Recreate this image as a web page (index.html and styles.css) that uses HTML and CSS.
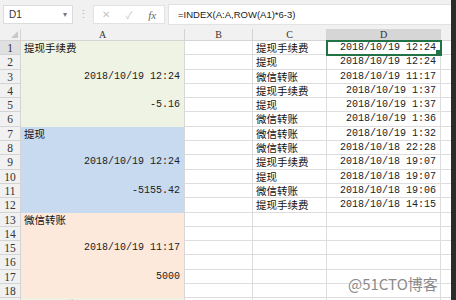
FILE: index.html
```html
<!DOCTYPE html>
<html lang="zh-CN">
<head>
    <meta charset="UTF-8">
    <title>INDEX 公式</title>
    <link rel="stylesheet" href="styles.css">
</head>
<body>
    <div class="window">
        <div class="toolbar">
            <div class="name-box">D1<span class="drop">&#9662;</span></div>
            <div class="dots">&#8942;</div>
            <div class="fx-buttons">
                <span class="btn">&#10005;</span>
                <span class="btn">&#10003;</span>
                <span class="btn fx">fx</span>
            </div>
            <div class="formula">=INDEX(A:A,ROW(A1)*6-3)</div>
        </div>
        <div class="sheet" id="sheet"></div>
        <div class="edge"></div>
        <div class="watermark">@51CTO博客</div>
    </div>

    <script>
        // column A is filled in groups of six rows
        const colA = {
            1: { text: '提现手续费' }, 3: { text: '2018/10/19 12:24', num: true }, 5: { text: '-5.16', num: true },
            7: { text: '提现' }, 9: { text: '2018/10/19 12:24', num: true }, 11: { text: '-5155.42', num: true },
            13: { text: '微信转账' }, 15: { text: '2018/10/19 11:17', num: true }, 17: { text: '5000', num: true },
            19: { text: '提现手续费' }
        };
        const list = [
            ['提现手续费', '2018/10/19 12:24'],
            ['提现', '2018/10/19 12:24'],
            ['微信转账', '2018/10/19 11:17'],
            ['提现手续费', '2018/10/19 1:37'],
            ['提现', '2018/10/19 1:37'],
            ['微信转账', '2018/10/19 1:36'],
            ['微信转账', '2018/10/19 1:32'],
            ['微信转账', '2018/10/18 22:28'],
            ['提现手续费', '2018/10/18 19:07'],
            ['提现', '2018/10/18 19:07'],
            ['微信转账', '2018/10/18 19:06'],
            ['提现手续费', '2018/10/18 14:15']
        ];
        const fills = ['green', 'blue', 'peach', 'green'];

        function cell(cls, text) {
            const d = document.createElement('div');
            d.className = 'cell ' + cls;
            if (text) d.textContent = text;
            return d;
        }

        const sheet = document.getElementById('sheet');
        sheet.appendChild(cell('corner'));
        ['A', 'B', 'C', 'D', 'E'].forEach(function (c) {
            sheet.appendChild(cell('col-head' + (c === 'D' ? ' active' : ''), c === 'E' ? '' : c));
        });

        for (let r = 1; r <= 19; r++) {
            sheet.appendChild(cell('row-head' + (r === 1 ? ' active' : ''), String(r)));
            const a = colA[r];
            const fill = fills[Math.floor((r - 1) / 6)];
            sheet.appendChild(cell('fill ' + fill + (a && a.num ? ' num' : ''), a ? a.text : ''));
            sheet.appendChild(cell('plain'));
            const item = list[r - 1];
            sheet.appendChild(cell('plain', item ? item[0] : ''));
            sheet.appendChild(cell('plain num' + (r === 1 ? ' selected' : ''), item ? item[1] : ''));
            sheet.appendChild(cell('plain'));
        }
    </script>
</body>
</html>
```

FILE: styles.css
```css
body {
    margin: 0;
    background-color: #ffffff;
    font-family: "Liberation Sans", "Noto Sans CJK SC", sans-serif;
}
.window {
    position: relative;
    width: 456px;
    height: 300px;
    overflow: hidden;
}
.toolbar {
    display: flex;
    align-items: center;
    height: 29px;
    padding: 0 0 0 3px;
    background-color: #f1f1f1;
    box-sizing: border-box;
}
.name-box {
    display: flex;
    justify-content: space-between;
    align-items: center;
    width: 70px;
    height: 19px;
    padding: 0 5px;
    box-sizing: border-box;
    background-color: #ffffff;
    border: 1px solid #dcdcdc;
    font-size: 10px;
    color: #333;
}
.drop {
    font-size: 8px;
    color: #777;
}
.dots {
    width: 20px;
    text-align: center;
    font-size: 11px;
    color: #b0b0b0;
}
.fx-buttons {
    display: flex;
    align-items: center;
    justify-content: space-around;
    width: 72px;
    height: 19px;
    background-color: #ffffff;
    border: 1px solid #e2e2e2;
    box-sizing: border-box;
}
.btn {
    font-size: 10px;
    color: #c4c4c4;
}
.btn.fx {
    font-family: "Liberation Serif", serif;
    font-style: italic;
    font-size: 11px;
    color: #666;
}
.formula {
    flex: 1;
    height: 19px;
    line-height: 19px;
    margin-left: 3px;
    padding-left: 9px;
    background-color: #ffffff;
    border: 1px solid #e2e2e2;
    border-right: none;
    font-size: 9.5px;
    color: #222;
}
.sheet {
    display: grid;
    grid-template-columns: 21px 164px 68px 74px 114px 20px;
    grid-template-rows: 12px repeat(19, 14.3px);
}
.cell {
    box-sizing: border-box;
    border-right: 1px solid #dddddd;
    border-bottom: 1px solid #dddddd;
    white-space: nowrap;
    overflow: hidden;
    font-size: 10.5px;
    line-height: 14px;
    padding: 0 3px;
    color: #111;
    font-family: "Noto Sans CJK SC", sans-serif;
}
.num {
    text-align: right;
    font-family: "Liberation Mono", monospace;
    font-size: 10px;
    color: #222;
    padding-right: 4px;
}
.corner, .col-head, .row-head {
    background-color: #f1f1f1;
    border-color: #d4d4d4;
    font-family: "Liberation Serif", serif;
    color: #333;
}
.corner {
    position: relative;
}
.corner::after {
    content: "";
    position: absolute;
    right: 2px;
    bottom: 2px;
    border-left: 7px solid transparent;
    border-bottom: 7px solid #c8c8c8;
}
.col-head {
    text-align: center;
    font-size: 10px;
    line-height: 12px;
}
.row-head {
    text-align: center;
    font-size: 11.5px;
    line-height: 14px;
    padding: 0;
}
.active {
    background-color: #d6d6d6;
}
.row-head.active {
    background-color: #e0e0e0;
}
.fill {
    border-bottom: none;
    border-right-color: #d8d8d8;
}
.green { background-color: #eff3e3; }
.blue { background-color: #c7daf0; }
.peach { background-color: #fde9dc; }
.selected {
    position: relative;
    outline: 2px solid #217346;
    outline-offset: -1px;
}
.selected::after {
    content: "";
    position: absolute;
    right: -1px;
    bottom: -1px;
    width: 4px;
    height: 4px;
    background-color: #217346;
    border: 1px solid #ffffff;
}
.edge {
    position: absolute;
    top: 0;
    right: 0;
    width: 5px;
    height: 300px;
    background-color: #2b2b2b;
}
.watermark {
    position: absolute;
    left: 348px;
    top: 273px;
    font-size: 15px;
    color: #8a8a8a;
    text-shadow: 0 0 2px #ffffff, 0 0 2px #ffffff;
    font-family: "Noto Sans CJK SC", sans-serif;
}
```
